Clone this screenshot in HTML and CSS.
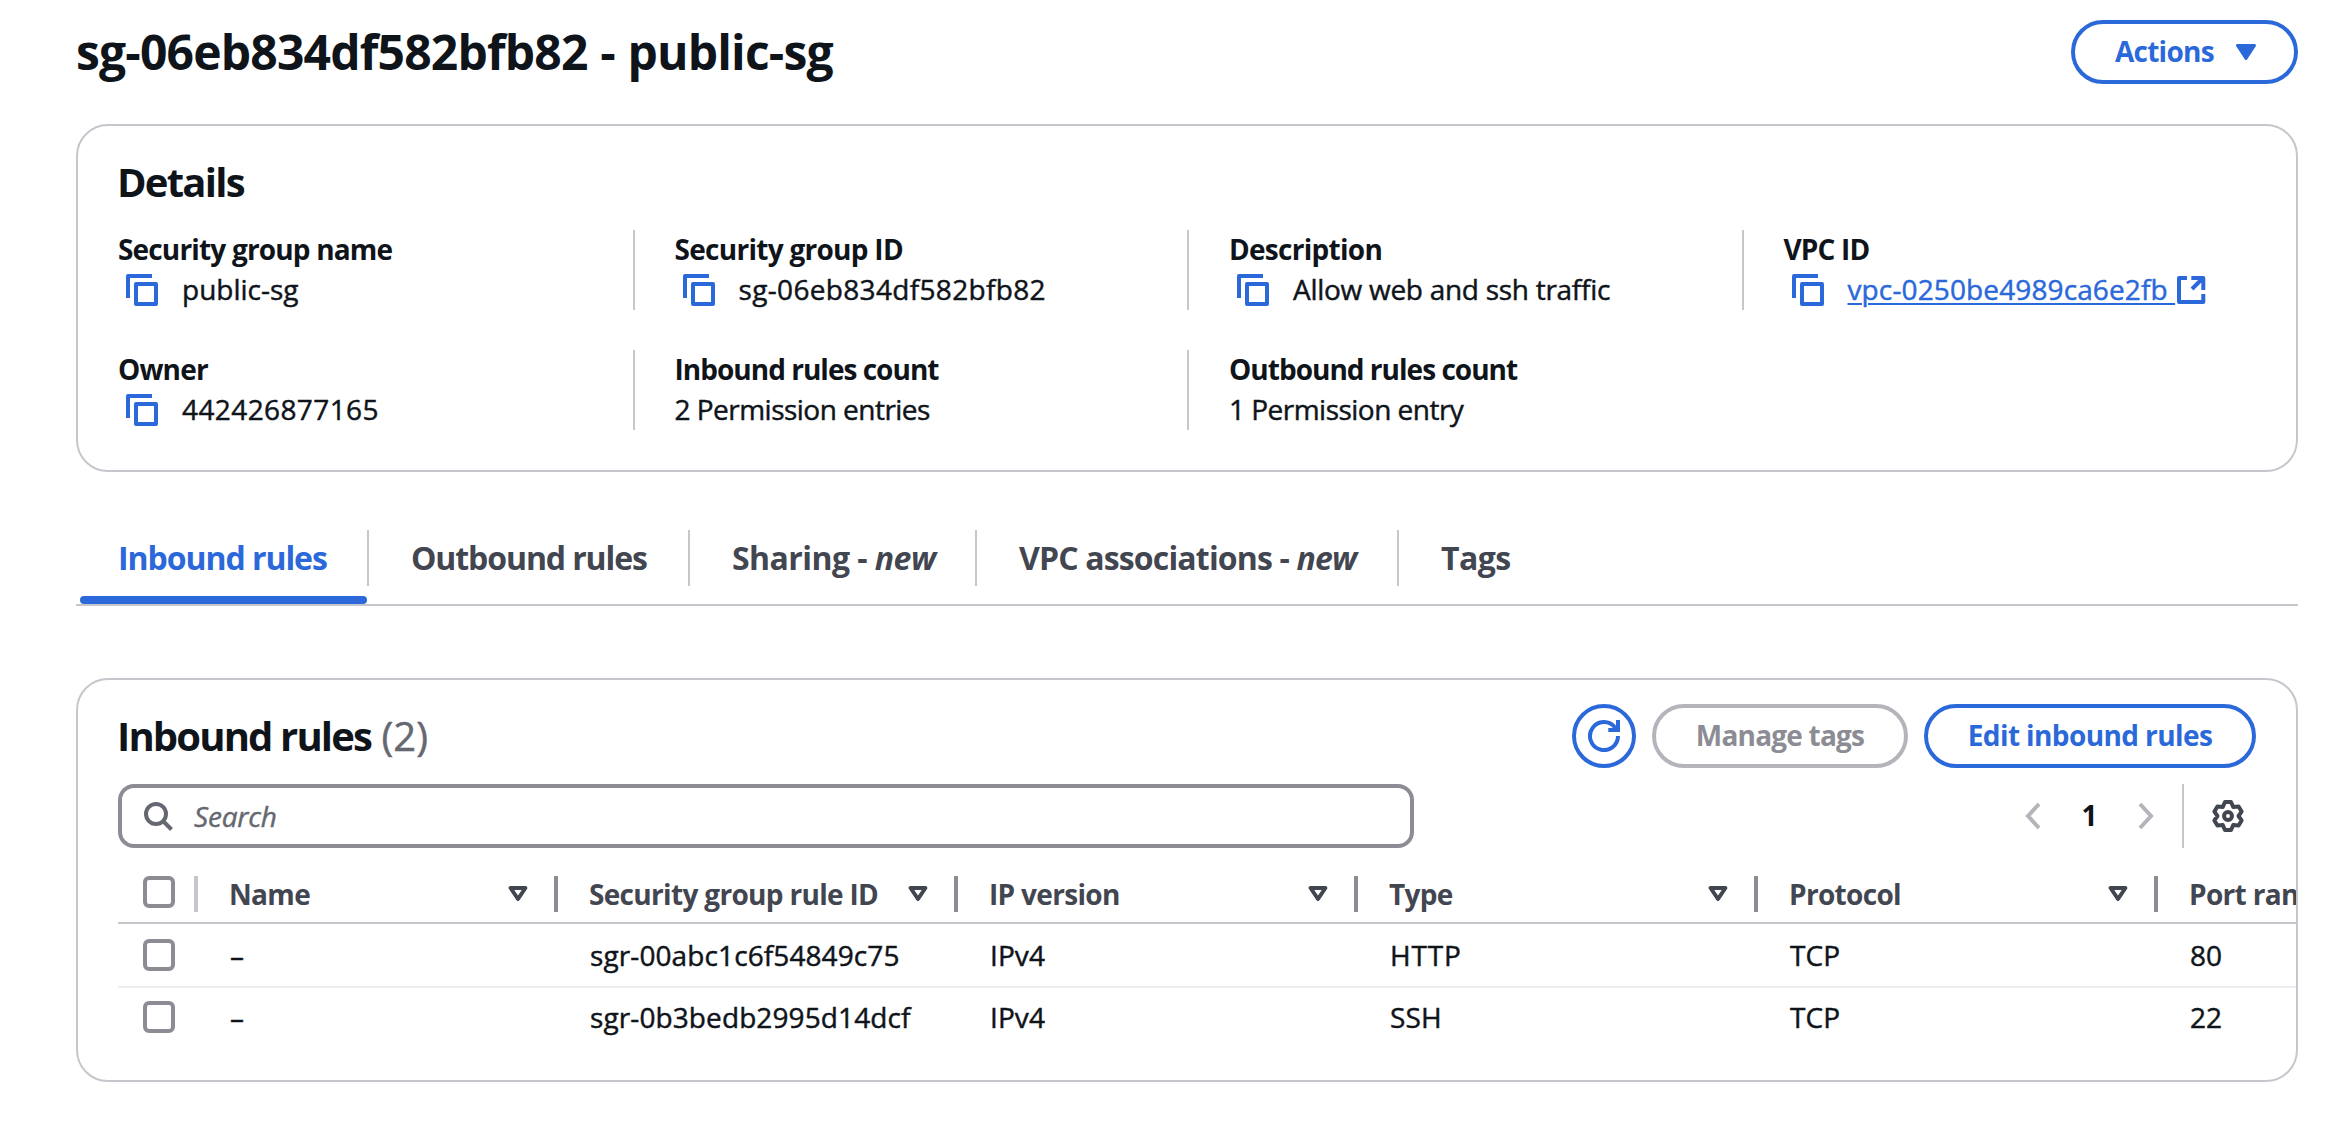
FILE: index.html
```html
<!DOCTYPE html>
<html lang="en">
<head>
<meta charset="utf-8">
<title>Security group</title>
<link rel="stylesheet" href="styles.css">
</head>
<body>
<svg width="0" height="0" class="defs" aria-hidden="true">
  <symbol id="copy" viewBox="0 0 32 32"><path d="M26 2H2V24M10 10H30V30H10Z" fill="none" stroke="currentColor" stroke-width="4" stroke-linejoin="round"/></symbol>
  <symbol id="sort" viewBox="0 0 20 16"><path d="M2.6 2H17.4L10 13Z" fill="none" stroke="currentColor" stroke-width="4" stroke-linejoin="round"/></symbol>
</svg>
<main class="page">
  <header class="page-header">
    <h1 class="title">sg-06eb834df582bfb82 - public-sg</h1>
    <button class="btn btn-actions"><span>Actions</span><svg width="20" height="16" viewBox="0 0 20 16"><path d="M1.5 1.5H18.5L10 14.5Z" fill="currentColor" stroke="currentColor" stroke-width="3" stroke-linejoin="round"/></svg></button>
  </header>

  <section class="card details">
    <h2 class="heading">Details</h2>
    <div class="grid">
      <div class="field"><div class="label">Security group name</div><div class="value"><svg class="copy"><use href="#copy"/></svg><span>public-sg</span></div></div>
      <div class="field"><div class="label tight">Security group ID</div><div class="value"><svg class="copy"><use href="#copy"/></svg><span class="id">sg-06eb834df582bfb82</span></div></div>
      <div class="field"><div class="label tight">Description</div><div class="value"><svg class="copy"><use href="#copy"/></svg><span class="desc">Allow web and ssh traffic</span></div></div>
      <div class="field"><div class="label">VPC ID</div><div class="value"><svg class="copy"><use href="#copy"/></svg><a class="link" href="#">vpc-0250be4989ca6e2fb </a><svg class="external" viewBox="0 0 32 32"><path d="M12 4H4V28H28.3V20M16.3 4H28.3V16M28 4L17 15" fill="none" stroke="currentColor" stroke-width="4" stroke-linejoin="round"/></svg></div></div>
      <div class="field"><div class="label">Owner</div><div class="value"><svg class="copy"><use href="#copy"/></svg><span class="num">442426877165</span></div></div>
      <div class="field"><div class="label count-label">Inbound rules count</div><div class="value count">2 Permission entries</div></div>
      <div class="field"><div class="label count-label">Outbound rules count</div><div class="value count">1 Permission entry</div></div>
    </div>
  </section>

  <nav class="tabs">
    <a class="tab tab-inbound active">Inbound rules</a>
    <a class="tab tab-outbound">Outbound rules</a>
    <a class="tab tab-sharing">Sharing - <i>new</i></a>
    <a class="tab tab-vpc">VPC associations - <i>new</i></a>
    <a class="tab tab-tags">Tags</a>
  </nav>

  <section class="card rules">
    <div class="toolbar">
      <h2 class="heading rules-title">Inbound rules <span class="counter">(2)</span></h2>
      <div class="actions">
        <button class="btn btn-icon"><svg width="32" height="32" viewBox="0 0 32 32"><path d="M30 16A14 14 0 1 1 27 7.4L28.5 9.5M30 0V10H20.3" fill="none" stroke="currentColor" stroke-width="4"/></svg></button>
        <button class="btn btn-manage" disabled>Manage tags</button>
        <button class="btn btn-edit">Edit inbound rules</button>
      </div>
    </div>
    <div class="toolbar filter">
      <div class="search"><svg width="32" height="32" viewBox="0 0 32 32"><path d="M21 21L29.5 29.5" stroke="currentColor" stroke-width="4"/><circle cx="14" cy="14" r="10" fill="none" stroke="currentColor" stroke-width="4"/></svg><span>Search</span></div>
      <div class="pager">
        <svg class="chev" viewBox="0 0 16 28"><path d="M14 2L3 14L14 26" fill="none" stroke="currentColor" stroke-width="4"/></svg>
        <span class="page-no">1</span>
        <svg class="chev" viewBox="0 0 16 28"><path d="M2 2L13 14L2 26" fill="none" stroke="currentColor" stroke-width="4"/></svg>
        <span class="rule"></span>
        <svg class="gear" viewBox="0 0 32 32"><path d="M13 2H19L21.2 6.9L26.6 6.4L29.6 11.6L26.5 16L29.6 20.4L26.6 25.6L21.2 25.1L19 30H13L10.8 25.1L5.4 25.6L2.4 20.4L5.5 16L2.4 11.6L5.4 6.4L10.8 6.9Z" fill="none" stroke="currentColor" stroke-width="4" stroke-linejoin="round"/><circle cx="16" cy="16" r="4" fill="none" stroke="currentColor" stroke-width="4"/></svg>
      </div>
    </div>
    <div class="table">
      <div class="row head">
        <div class="th select"><span class="check"></span></div>
        <div class="th"><span>Name</span><svg class="sort"><use href="#sort"/></svg></div>
        <div class="th"><span>Security group rule ID</span><svg class="sort"><use href="#sort"/></svg></div>
        <div class="th"><span>IP version</span><svg class="sort"><use href="#sort"/></svg></div>
        <div class="th"><span>Type</span><svg class="sort"><use href="#sort"/></svg></div>
        <div class="th"><span>Protocol</span><svg class="sort"><use href="#sort"/></svg></div>
        <div class="th"><span>Port range</span></div>
      </div>
      <div class="row first">
        <div class="select"><span class="check"></span></div>
        <div class="td">–</div><div class="td">sgr-00abc1c6f54849c75</div><div class="td">IPv4</div><div class="td caps">HTTP</div><div class="td">TCP</div><div class="td">80</div>
      </div>
      <div class="row last">
        <div class="select"><span class="check"></span></div>
        <div class="td">–</div><div class="td">sgr-0b3bedb2995d14dcf</div><div class="td">IPv4</div><div class="td">SSH</div><div class="td">TCP</div><div class="td">22</div>
      </div>
    </div>
  </section>
</main>
</body>
</html>
```
FILE: styles.css
```css
* { box-sizing: border-box; }
body {
  margin: 0;
  background: #fff;
  color: #0f141a;
  font: 400 28px/40px "Open Sans", "Noto Sans", sans-serif;
}
svg { display: block; flex: none; }
.defs { position: absolute; }
.page { padding: 20px 48px 0 76px; }

.page-header { display: flex; justify-content: space-between; height: 64px; }
.title { margin: 2px 0 0; font-size: 48px; line-height: 60px; font-weight: 700; letter-spacing: -0.82px; word-spacing: 1px; }

.btn {
  display: flex;
  align-items: center;
  justify-content: center;
  height: 64px;
  padding: 0 0 2px;
  border: 4px solid #2b69da;
  border-radius: 40px;
  background: #fff;
  color: #2b69da;
  font: 700 28px/40px "Open Sans", "Noto Sans", sans-serif;
  letter-spacing: -0.6px;
}
.btn:disabled { border-color: #b4b4bb; color: #8c8c94; letter-spacing: -0.8px; }
.btn-actions { width: 227px; justify-content: space-between; padding: 0 38px 2px 40px; }
.btn-actions span { letter-spacing: -0.75px; }
.btn-actions svg { margin-top: 2px; }
.btn-icon { width: 64px; padding: 0; }
.btn-manage { width: 256px; }
.btn-edit { width: 332px; }

.card { border: 2px solid #c6c6cd; border-radius: 32px; }
.heading { margin: 0; font-size: 40px; line-height: 48px; font-weight: 700; letter-spacing: -1.75px; }

.details { height: 348px; margin-top: 40px; padding-top: 32px; }
.details .heading { margin: 0 0 24px 39px; }
.grid { display: grid; grid-template-columns: repeat(4, 1fr); grid-auto-rows: 80px; row-gap: 40px; }
.field { padding-left: 40px; border-left: 2px solid #c6c6cd; }
.field:nth-child(4n+1) { border-left: 0; }
.label { line-height: 39px; font-weight: 700; letter-spacing: -0.83px; }
.label.tight { letter-spacing: -0.72px; }
.label.count-label { letter-spacing: -0.98px; }
.value { display: flex; align-items: center; height: 40px; line-height: 40px; white-space: pre; }
.copy { width: 32px; height: 32px; margin: 2px 24px 0 8px; color: #2b69da; }
.id { letter-spacing: 0.33px; }
.desc { letter-spacing: -0.28px; }
.num { letter-spacing: 0.4px; }
.count { letter-spacing: -0.52px; }
.link { color: #2b69da; letter-spacing: 0.12px; text-decoration: underline 2px; text-underline-offset: 3px; }
.external { width: 32px; height: 32px; margin-top: 2px; color: #2b69da; }

/* Regular text is drawn slightly heavier than the plain 400 weight. */
.value, .td, .search span, .counter { -webkit-text-stroke: 0.45px currentColor; }

.tabs { display: flex; height: 76px; margin-top: 58px; padding-left: 2px; border-bottom: 2px solid #c6c6cd; }
.tab {
  height: 56px;
  padding-left: 42px;
  border-right: 2px solid #c6c6cd;
  color: #424650;
  font-size: 32px;
  line-height: 56px;
  font-weight: 700;
  letter-spacing: -0.55px;
  white-space: nowrap;
}
.tab-inbound { position: relative; width: 291px; padding-left: 40px; letter-spacing: -1.05px; }
.tab-outbound { width: 321px; letter-spacing: -1.1px; }
.tab-sharing { width: 287px; }
.tab-vpc { width: 422px; letter-spacing: -0.84px; }
.tab-tags { border-right: 0; }
.active { color: #2b69da; }
.active::after { content: ""; position: absolute; left: 2px; right: 0; bottom: -18px; height: 8px; border-radius: 4px; background: #2b69da; }

.rules { height: 404px; margin-top: 72px; padding: 24px 0 0 40px; overflow: hidden; }
.toolbar { display: flex; align-items: center; justify-content: space-between; height: 64px; padding-right: 40px; }
.rules-title { margin-left: -1px; letter-spacing: -1.85px; }
.counter { margin-left: 2px; color: #656871; font-weight: 400; letter-spacing: 0; }
.actions { display: flex; gap: 16px; }
.filter { margin-top: 16px; }
.search {
  display: flex;
  align-items: center;
  gap: 20px;
  width: 1296px;
  height: 64px;
  padding-left: 20px;
  border: 4px solid #8c8c94;
  border-radius: 16px;
  color: #656871;
}
.search span { font-style: italic; letter-spacing: -0.2px; }
.pager { display: flex; align-items: center; padding-right: 12px; }
.chev { width: 16px; height: 28px; color: #b4b4bb; }
.page-no { width: 97px; padding-bottom: 2px; text-align: center; font-weight: 700; }
.rule { width: 2px; height: 64px; margin: 0 28px; background: #c6c6cd; }
.gear { width: 32px; height: 32px; color: #424650; }

.row { display: grid; grid-template-columns: 80px 360px repeat(5, 400px); align-items: center; width: 2440px; }
.head { height: 76px; padding: 28px 0 10px; border-bottom: 2px solid #c6c6cd; color: #424650; }
.th {
  display: flex;
  align-items: center;
  justify-content: space-between;
  height: 36px;
  padding: 0 26px 0 31px;
  border-right: 4px solid #8c8c94;
  font-weight: 700;
  letter-spacing: -0.68px;
}
.th span:first-child { margin-top: -1px; }
.th.select { align-items: flex-start; border-color: #c6c6cd; }
.th.select .check { margin-top: 0; }
.select { padding: 0 0 0 25px; }
.check { display: block; width: 32px; height: 32px; border: 4px solid #8c8c94; border-radius: 6px; }
.sort { width: 20px; height: 16px; }
.first { height: 64px; border-bottom: 2px solid #ebebf0; }
.last { height: 58px; }
.td { padding-left: 32px; letter-spacing: 0.1px; }
.caps { letter-spacing: 0.8px; }
```
